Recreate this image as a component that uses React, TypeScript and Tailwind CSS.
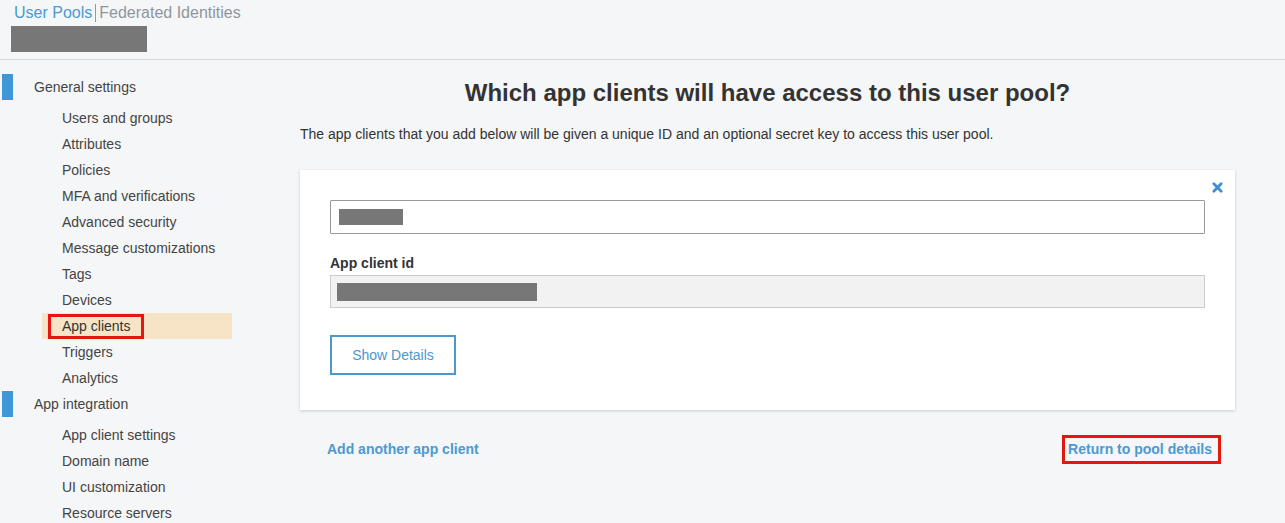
import React from 'react';

const generalItems = [
  'Users and groups',
  'Attributes',
  'Policies',
  'MFA and verifications',
  'Advanced security',
  'Message customizations',
  'Tags',
  'Devices',
  'App clients',
  'Triggers',
  'Analytics',
];

const integrationItems = ['App client settings', 'Domain name', 'UI customization', 'Resource servers'];

const SectionHeader: React.FC<{ label: string }> = ({ label }) => (
  <div className="flex items-center h-[26px]">
    <div className="w-[11px] h-[26px] ml-[2px] bg-[#3f97d7]" />
    <span className="ml-[21px] text-[14px] text-[#444]">{label}</span>
  </div>
);

const NavItem: React.FC<{ label: string; active?: boolean }> = ({ label, active }) => (
  <div className={`flex items-center h-[26px] ml-[42px] w-[190px] ${active ? 'bg-[#f7e4c6]' : ''}`}>
    {active ? (
      <span className="ml-[6px] px-[11px] h-[25px] border-[3px] border-[#e5150f] text-[14px] text-[#333] flex items-center">
        {label}
      </span>
    ) : (
      <span className="ml-[20px] text-[14px] text-[#444]">{label}</span>
    )}
  </div>
);

export default function App() {
  return (
    <div className="w-[1285px] h-[523px] overflow-hidden bg-[#f5f6f7] font-['Liberation_Sans',Arial,sans-serif]">
      <div className="h-[60px] border-b border-[#d5d9dc] pl-[14px] pt-[3px]">
        <div className="flex items-center text-[16px] leading-[20px]">
          <span className="text-[#4a9ad4]">User Pools</span>
          <span className="mx-[3px] w-px h-[18px] bg-[#999]" />
          <span className="text-[#8d969c]">Federated Identities</span>
        </div>
        <div className="mt-[3px] -ml-[3px] w-[136px] h-[26px] bg-[#777]" />
      </div>

      <div className="flex">
        <aside className="w-[300px] shrink-0 pt-[14px]">
          <SectionHeader label="General settings" />
          <div className="mt-[5px]">
            {generalItems.map((item) => (
              <NavItem key={item} label={item} active={item === 'App clients'} />
            ))}
          </div>
          <SectionHeader label="App integration" />
          <div className="mt-[5px]">
            {integrationItems.map((item) => (
              <NavItem key={item} label={item} />
            ))}
          </div>
        </aside>

        <main className="w-[935px] pt-[19px]">
          <h1 className="text-center text-[24px] leading-[28px] font-bold text-[#333]">
            Which app clients will have access to this user pool?
          </h1>
          <p className="mt-[18px] text-[14px] leading-[18px] text-[#333]">
            The app clients that you add below will be given a unique ID and an optional secret key to access this user pool.
          </p>

          <div className="relative mt-[27px] h-[240px] bg-white shadow-[0_1px_3px_rgba(0,0,0,0.18)] px-[30px] pt-[30px]">
            <button className="absolute right-[12px] top-[12px] text-[#3d8fd1]">
              <svg width="11" height="11" viewBox="0 0 12 12">
                <path d="M2 2 L10 10 M10 2 L2 10" stroke="currentColor" strokeWidth="3" strokeLinecap="round" />
              </svg>
            </button>
            <div className="h-[34px] border border-[#999] rounded-[1px] flex items-center pl-[8px]">
              <div className="w-[64px] h-[16px] bg-[#777]" />
            </div>
            <div className="mt-[20px] text-[14px] font-bold text-[#333] leading-[18px]">App client id</div>
            <div className="mt-[3px] h-[33px] border border-[#ccc] bg-[#f2f2f2] flex items-center pl-[6px]">
              <div className="w-[200px] h-[18px] bg-[#777]" />
            </div>
            <button className="mt-[27px] w-[126px] h-[40px] border-2 border-[#4b98cb] text-[14px] text-[#4b98cb] bg-white">
              Show Details
            </button>
          </div>

          <div className="flex items-center justify-between mt-[25px] pl-[27px] pr-[14px]">
            <span className="text-[14px] font-bold text-[#4a9ad4]">Add another app client</span>
            <span className="h-[29px] pl-[3px] pr-[6px] flex items-center border-[3px] border-[#e5150f] text-[14px] font-bold text-[#4a9ad4]">
              Return to pool details
            </span>
          </div>
        </main>
      </div>
    </div>
  );
}
